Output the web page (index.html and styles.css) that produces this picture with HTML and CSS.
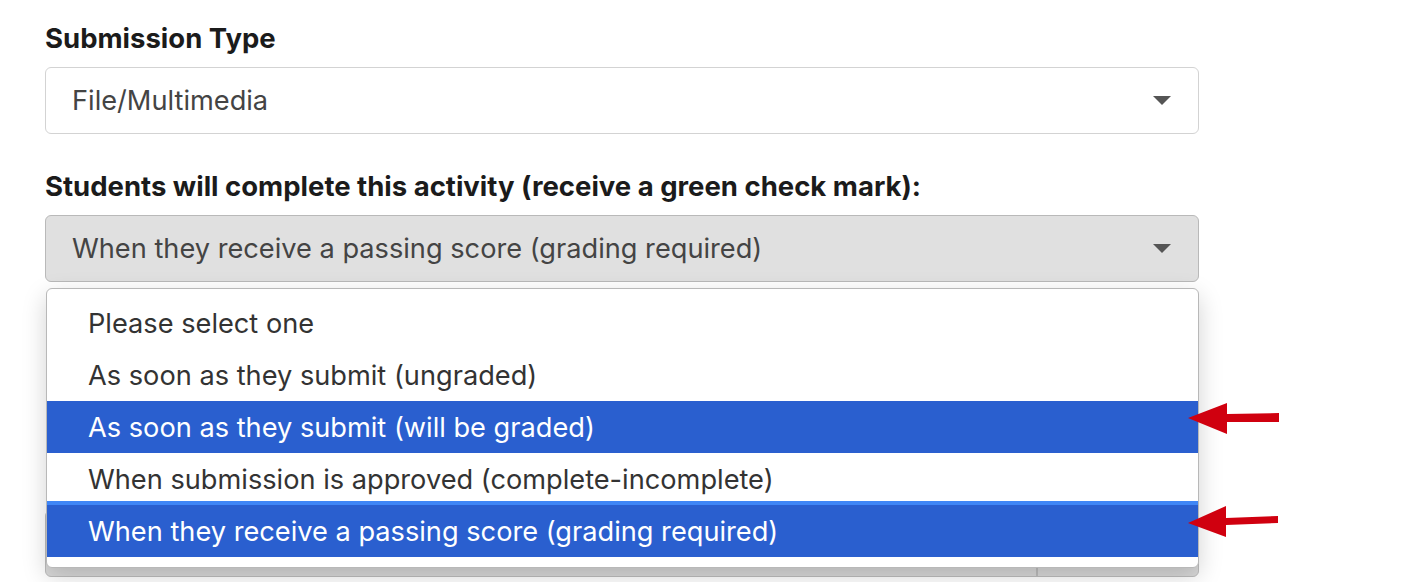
FILE: index.html
```html
<!DOCTYPE html>
<html lang="en">
<head>
    <meta charset="UTF-8">
    <meta name="viewport" content="width=device-width, initial-scale=1.0">
    <title>Activity Settings</title>
    <link rel="stylesheet" href="styles.css">
</head>
<body>
    <form class="settings">
        <!-- Submission type -->
        <div class="field">
            <label class="field-label">Submission Type</label>
            <div class="select">
                <span class="select-value">File/Multimedia</span>
                <span class="caret"></span>
            </div>
        </div>

        <!-- Completion rule, shown with its list open -->
        <div class="field">
            <label class="field-label">Students will complete this activity (receive a green check mark):</label>
            <div class="select-wrap">
                <div class="select open">
                    <span class="select-value">When they receive a passing score (grading required)</span>
                    <span class="caret"></span>
                </div>
                <ul class="options">
                    <li class="option">Please select one</li>
                    <li class="option">As soon as they submit (ungraded)</li>
                    <li class="option selected">As soon as they submit (will be graded)</li>
                    <li class="option focus">When submission is approved (complete-incomplete)</li>
                    <li class="option selected">When they receive a passing score (grading required)</li>
                </ul>
            </div>
        </div>

        <!-- Next field, mostly hidden behind the open list -->
        <div class="field field-score">
            <div class="score">
                <div class="score-input"></div>
                <div class="score-unit"></div>
            </div>
        </div>

        <!-- Annotation arrows -->
        <svg class="arrow arrow-one" width="100" height="40" viewBox="0 0 100 40">
            <polygon points="0,16 39,1 39,12 91,11 91,20 39,20 39,32" fill="#d0000f"/>
        </svg>
        <svg class="arrow arrow-two" width="100" height="40" viewBox="0 0 100 40">
            <polygon points="0,17 38,0 38,12 90,10 90,17 38,19 38,31" fill="#d0000f"/>
        </svg>
    </form>
</body>
</html>
```

FILE: styles.css
```css
html {
    min-height: 582px;
}

body {
    margin: 0;
    min-height: 582px;
    background-color: #ffffff;
    font-family: Inter, "Liberation Sans", Arial, sans-serif;
}

.settings {
    position: relative;
    width: 1154px;
    padding: 23px 0 0 45px;
}

.field {
    margin-bottom: 37px;
}

.field-score {
    padding-top: 191px;
    margin-bottom: 0;
}

.field-label {
    display: block;
    font-size: 27.5px;
    font-weight: 700;
    color: #1b1b1b;
    line-height: 30px;
    margin-bottom: 14px;
}

.select {
    height: 65px;
    border: 1px solid #d3d3d3;
    border-radius: 6px;
    background-color: #ffffff;
    display: flex;
    align-items: center;
    justify-content: space-between;
    padding: 0 26px;
    font-size: 27.2px;
    color: #444444;
}

.select.open {
    background-color: #e0e0e0;
    border-color: #b9b9b9;
}

.caret {
    width: 0;
    height: 0;
    border-left: 9px solid transparent;
    border-right: 9px solid transparent;
    border-top: 9px solid #555555;
    margin-right: 1px;
}

.select-wrap {
    position: relative;
}

/* open list lies over the fields below */
.options {
    position: absolute;
    top: 73px;
    left: 1px;
    right: 0;
    z-index: 2;
    margin: 0;
    padding: 8px 0 10px;
    list-style: none;
    background-color: #ffffff;
    border: 1px solid #b8b8b8;
    border-radius: 6px;
    box-shadow: 0 8px 24px rgba(0, 0, 0, 0.18);
}

.option {
    height: 52px;
    line-height: 54px;
    padding-left: 41px;
    font-size: 27.2px;
    color: #333333;
}

.option.selected {
    background-color: #2a5fcf;
    color: #ffffff;
}

.option.focus {
    box-shadow: inset 0 -4px 0 #3f86f6;
}

.score {
    height: 65px;
    display: flex;
    border: 1px solid #bdbdbd;
    border-radius: 6px;
    background-color: #d9d9d9;
}

.score-input {
    flex: 1;
}

.score-unit {
    width: 160px;
    border-left: 2px solid #bdbdbd;
}

.arrow {
    position: absolute;
    z-index: 3;
}

.arrow-one {
    left: 1188px;
    top: 402px;
}

.arrow-two {
    left: 1188px;
    top: 506px;
}
```
